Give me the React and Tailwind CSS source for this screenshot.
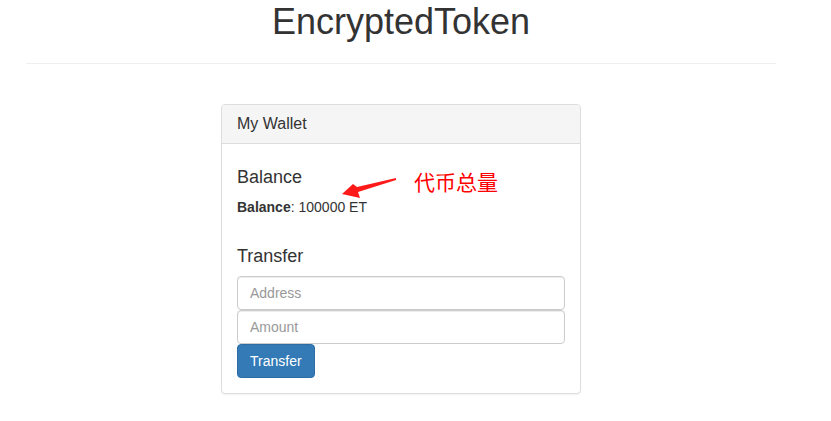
export default function App() {
  return (
    <div className="min-h-[421px] bg-white font-['Liberation_Sans',Arial,sans-serif] text-[#333]">
      <div className="relative w-[802px]">
        <h1 className="pt-[2px] text-center text-[36px] leading-[40px] font-medium">
          EncryptedToken
        </h1>
        <hr className="mx-[26px] mt-[21px] border-0 border-t border-[#eee]" />

        <div className="mx-auto mt-[40px] w-[360px] rounded-[4px] border border-[#ddd] bg-white shadow-[0_1px_1px_rgba(0,0,0,0.05)]">
          <div className="rounded-t-[3px] border-b border-[#ddd] bg-[#f5f5f5] px-[15px] py-[10px]">
            <h3 className="text-[16px] leading-[18px]">My Wallet</h3>
          </div>
          <div className="p-[15px]">
            <h4 className="mt-[8px] mb-[10px] text-[18px] leading-[20px]">Balance</h4>
            <p className="mb-[10px] text-[14px] leading-[20px]">
              <strong className="font-bold">Balance</strong>: 100000 ET
            </p>
            <h4 className="mt-[29px] mb-[10px] text-[18px] leading-[20px]">Transfer</h4>
            <input
              type="text"
              placeholder="Address"
              className="block h-[34px] w-full rounded-[4px] border border-[#ccc] px-[12px] py-[6px] text-[14px] leading-[20px] shadow-[inset_0_1px_1px_rgba(0,0,0,0.075)] outline-none placeholder:text-[#999]"
            />
            <input
              type="text"
              placeholder="Amount"
              className="block h-[34px] w-full rounded-[4px] border border-[#ccc] px-[12px] py-[6px] text-[14px] leading-[20px] shadow-[inset_0_1px_1px_rgba(0,0,0,0.075)] outline-none placeholder:text-[#999]"
            />
            <button className="block h-[34px] rounded-[4px] border border-[#2e6da4] bg-[#337ab7] px-[12px] py-[6px] text-[14px] leading-[20px] text-white">
              Transfer
            </button>
          </div>
        </div>

        {/* annotation */}
        <svg
          className="absolute left-[330px] top-[170px] h-[32px] w-[70px]"
          viewBox="330 170 70 32"
        >
          <polygon
            points="342,194 353,184 357,187 396,178 396,180 358,192 360,198"
            fill="#ff1a1a"
          />
        </svg>
        <div className="absolute left-[414px] top-[171px] text-[21px] leading-[21px] text-[#ff0000] font-['Noto_Sans_CJK_SC',sans-serif]">
          代币总量
        </div>
      </div>
    </div>
  );
}
